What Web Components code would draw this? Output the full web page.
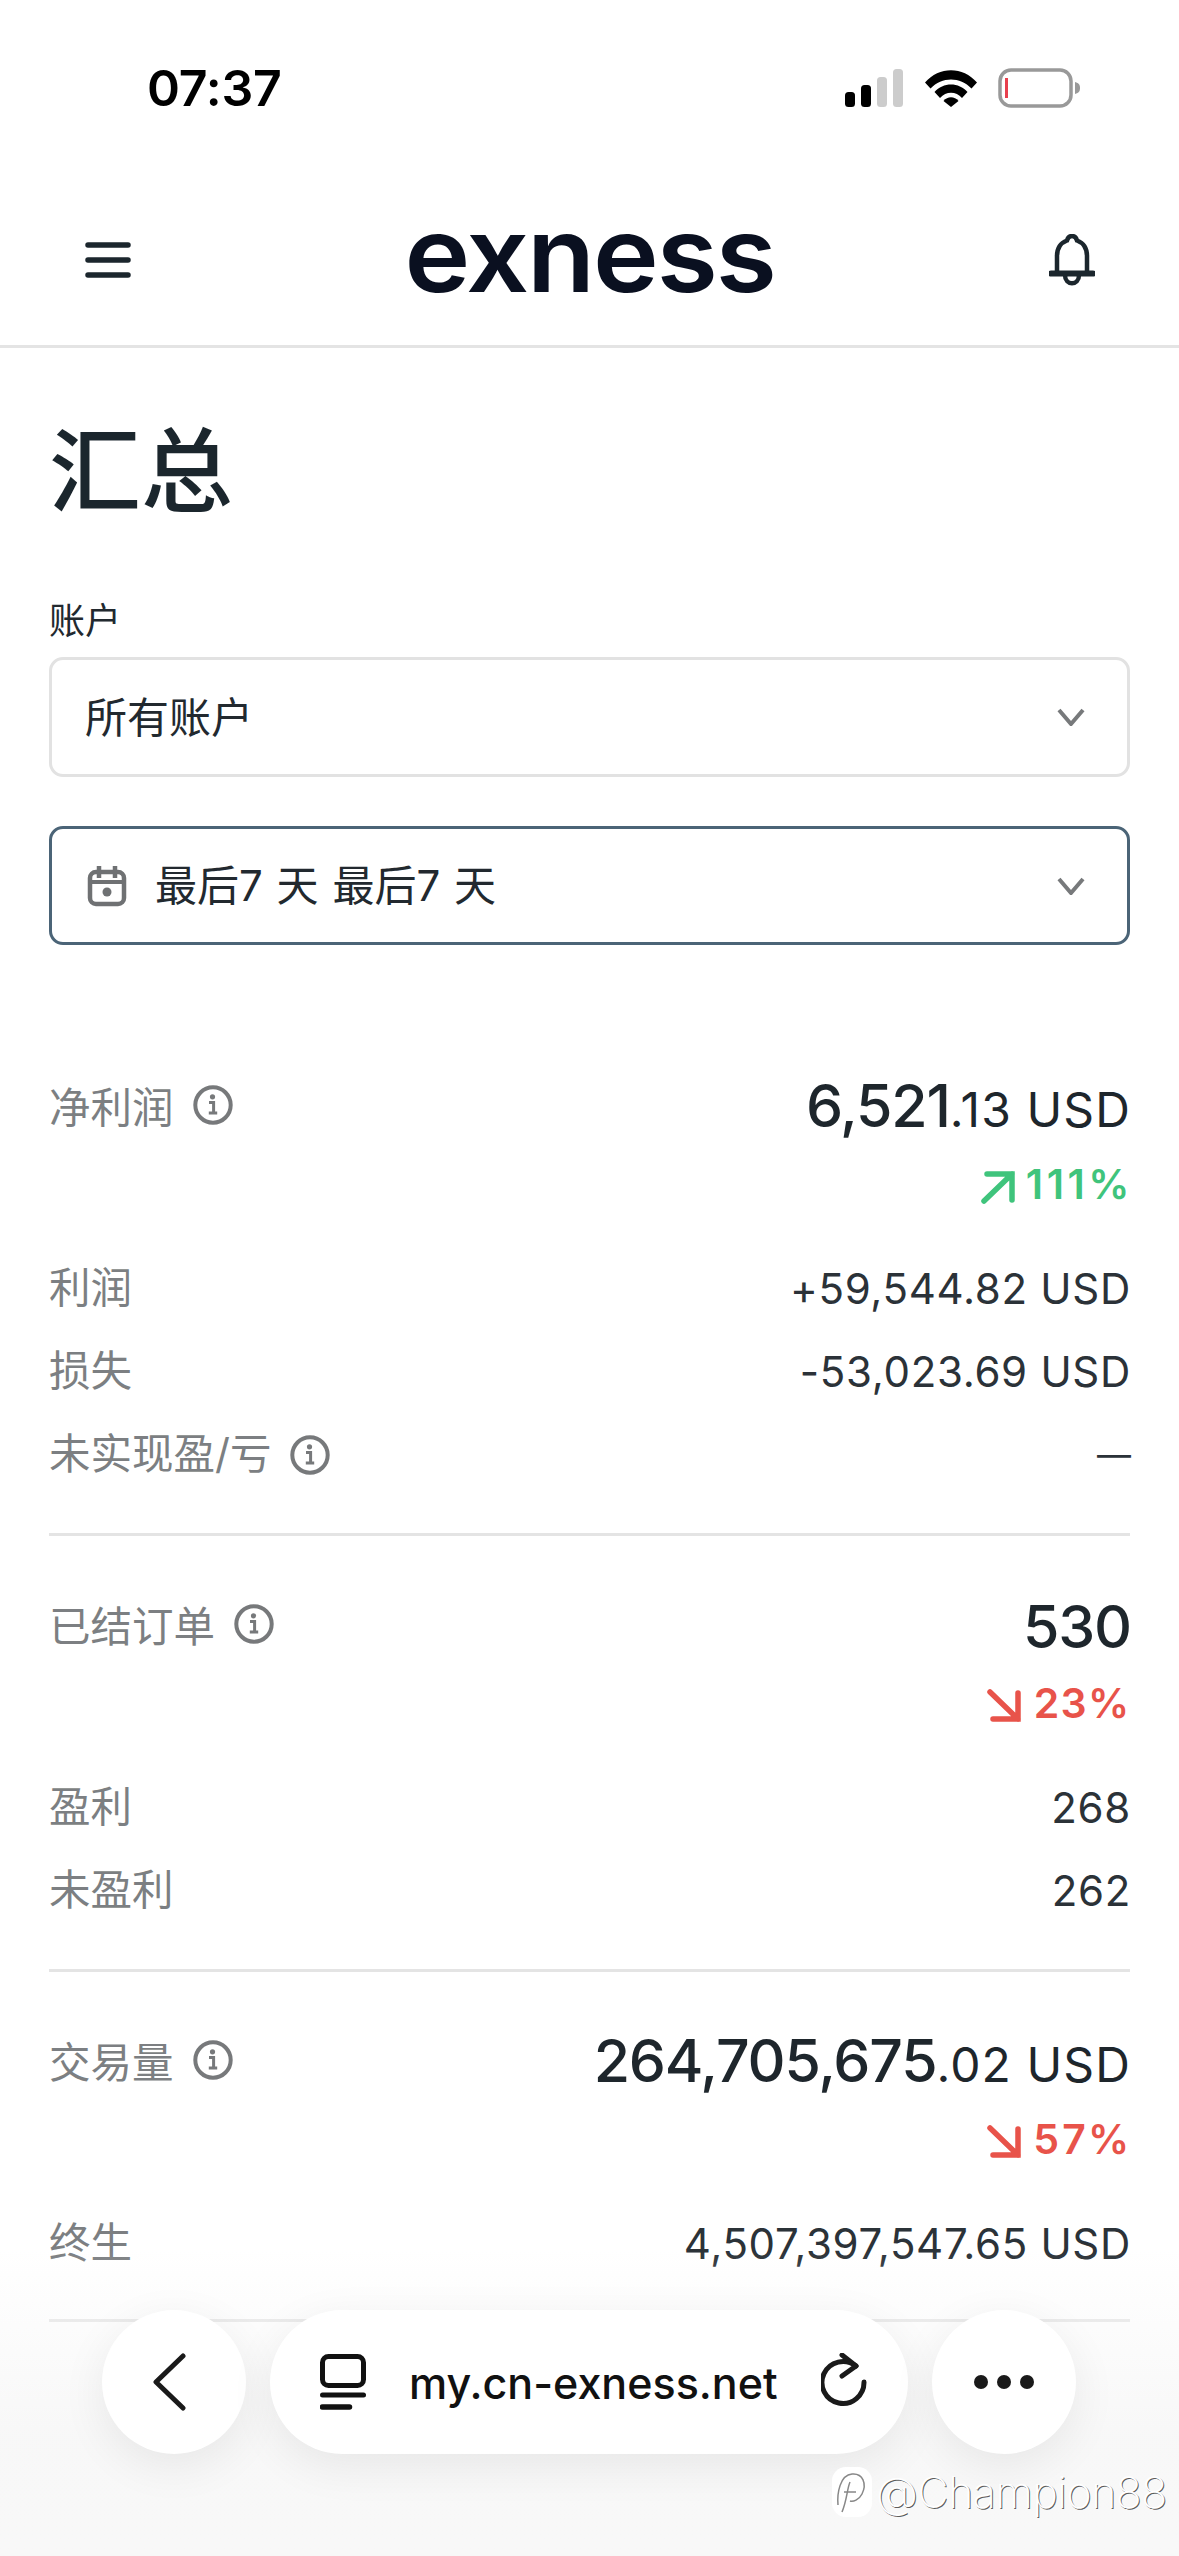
<!DOCTYPE html>
<html lang="zh"><head><meta charset="utf-8">
<style>
html,body{margin:0;padding:0;background:#fff}
body{width:1179px;height:2556px;overflow:hidden;position:relative;font-family:Inter,"Noto Sans CJK SC",sans-serif;color:#22292f}
</style></head>
<body>
<status-bar></status-bar>
<top-nav></top-nav>
<summary-page>
  <select-field label="账户" text="所有账户"></select-field>
  <select-field text="最后7 天 最后7 天" calendar active></select-field>
  <metric-group first>
    <metric-head label="净利润" big="6,521" small=".13 USD" trend="up" pct="111%"></metric-head>
    <metric-row label="利润" value="+59,544.82 USD"></metric-row>
    <metric-row label="损失" value="-53,023.69 USD"></metric-row>
    <metric-row label="未实现盈/亏" value="—" info dash></metric-row>
  </metric-group>
  <metric-group>
    <metric-head label="已结订单" big="530" trend="down" pct="23%"></metric-head>
    <metric-row label="盈利" value="268"></metric-row>
    <metric-row label="未盈利" value="262"></metric-row>
  </metric-group>
  <metric-group last>
    <metric-head label="交易量" big="264,705,675" small=".02 USD" trend="down" pct="57%"></metric-head>
    <metric-row label="终生" value="4,507,397,547.65 USD"></metric-row>
  </metric-group>
</summary-page>
<browser-bar></browser-bar>
<water-mark></water-mark>
<script>
const INFO=`<svg width="40" height="40" viewBox="0 0 40 40" fill="none" aria-hidden="true"><circle cx="20" cy="20" r="17.7" stroke="#77797b" stroke-width="4"/><circle cx="19.5" cy="11.8" r="2.6" fill="#77797b"/><path d="M16 17.5h4.6v10.2M15.8 28h8.4" stroke="#77797b" stroke-width="3"/></svg>`;
function el(name,html){customElements.define(name,class extends HTMLElement{
  connectedCallback(){ if(this.shadowRoot)return; const s=this.attachShadow({mode:'open'}); s.innerHTML=typeof html==='function'?html(this):html; }
});}
el('status-bar',`<style>
:host{display:flex;height:175px;align-items:center;justify-content:space-between;padding:0 98px 0 147px;box-sizing:border-box}
.t{font:600 50px/1 Inter,sans-serif;color:#000;letter-spacing:-.2px}
.i{display:flex;gap:21px;align-items:center}
</style><div class="t">07:37</div><div class="i">
<svg width="59" height="38" viewBox="0 0 59 38"><rect x="0" y="23" width="10" height="15" rx="3.5"/><rect x="16" y="16" width="10" height="22" rx="3.5"/><rect x="32" y="8" width="10" height="30" rx="3.5" fill="#ccc"/><rect x="48" y="0" width="10" height="38" rx="3.5" fill="#ccc"/></svg>
<svg width="52" height="38" viewBox="0 0 52 38"><path d="M0 13.5C14-3 38-3 52 13.5l-5.5 6C35 7.500 17 7.500 5.500 19.500z"/><path d="M9.500 23C18 13 34 13 42.500 23l-5.500 6C31 22 21 22 15 29z"/><path d="M18.500 32C22.500 27 29.500 27 33.500 32L26 38z"/></svg>
<svg width="83" height="40" viewBox="0 0 83 40" fill="none"><rect x="2" y="2" width="71" height="36" rx="11" stroke="#999" stroke-width="3.500"/><rect x="7" y="10" width="3" height="20" fill="#e8404e"/><path d="M77 14c4 1 5 3 5 6s-1 5-5 6z" fill="#999"/></svg>
</div>`);
el('top-nav',`<style>
:host{display:flex;height:173px;box-sizing:border-box;padding:0 85px 1px;align-items:center;justify-content:space-between;border-bottom:3px solid #e4e4e4}
.l{font:600 105px/1 Inter,sans-serif;color:#0a1020;letter-spacing:-2px;margin-top:-13px;margin-left:-1px;transform:scaleX(1.06)}
svg{display:block}
</style>
<svg width="46" height="36" viewBox="0 0 46 36" stroke="#1b262d" stroke-width="5.500" stroke-linecap="round"><path d="M3 3h40M3 18h40M3 33h40"/></svg>
<div class="l">exness</div>
<svg width="46" height="52" viewBox="0 0 46 52" fill="none" stroke="#1b262d" style="margin-right:-1px"><path d="M8 39V22C8 12 14 8 18 6.500C19.500 0.500 26.500 0.500 28 6.500C32 8 38 12 38 22V39" stroke-width="4.500"/><path d="M2 39.500H44" stroke-width="6" stroke-linecap="round"/><path d="M16 41c0 11 14 11 14 0" stroke-width="4.500"/></svg>`);
el('summary-page',`<style>
:host{display:block;padding:0 49px}
h1{margin:74px 0 0;font:500 92px/100px Inter,"Noto Sans CJK SC",sans-serif;color:#1b262d}
</style><h1>汇总</h1><slot></slot>`);
el('select-field',h=>{
 const lab=h.getAttribute('label'),act=h.hasAttribute('active'),cal=h.hasAttribute('calendar');
 return `<style>
:host{display:block;margin-top:${lab?79:49}px}
.lab{font:400 36px/40px Inter,"Noto Sans CJK SC",sans-serif;color:#22292f;margin-bottom:16px}
.box{height:${act?119:120}px;box-sizing:border-box;border:3px solid ${act?'#4b6477':'#e2e2e2'};border-radius:14px;display:flex;align-items:center;padding:0 42px 0 ${cal?35:33}px;font:400 42px/1 Inter,"Noto Sans CJK SC",sans-serif;color:#22292f}
.t{flex:1;white-space:pre;word-spacing:2px;margin-top:1px}
.c{margin-right:28px;display:block}
</style>${lab?`<div class="lab">${lab}</div>`:''}<div class="box">${cal?`<svg class="c" width="40" height="42" viewBox="0 0 40 42" fill="none"><rect x="3" y="7" width="34" height="32" rx="6" stroke="#6f7173" stroke-width="4.500"/><path d="M3 17h34" stroke="#6f7173" stroke-width="4"/><path d="M12 1v12M28 1v12" stroke="#6f7173" stroke-width="4.500"/><circle cx="20" cy="27" r="4.500" fill="#6f7173"/></svg>`:''}<span class="t">${h.getAttribute('text')}</span>
<svg width="28" height="18" viewBox="0 0 28 18" fill="none"><path d="M2 2l12 14L26 2" stroke="#77797b" stroke-width="4"/></svg></div>`;});
el('metric-group',h=>`<style>
:host{display:block;border-bottom:3px solid #e4e4e4;padding-bottom:${h.hasAttribute('last')?34:37}px;${h.hasAttribute('first')?'margin-top:72px':''}}
</style><slot></slot>`);
el('metric-head',h=>{const up=h.getAttribute('trend')==='up',col=up?'#3fc47c':'#e8534a';
 return `<style>
:host{display:block;padding-top:54px;margin-bottom:38px;font-family:Inter,"Noto Sans CJK SC",sans-serif}
.r{display:flex;justify-content:space-between;height:70px;align-items:center}
.l{display:flex;align-items:center;gap:19px;font-size:41.5px;color:#7c7f82;margin-top:-2px}
svg{display:block}
.v{font-size:59px;font-weight:500;color:#1e262c;line-height:70px;letter-spacing:-1.2px;margin-top:3px;margin-right:-1px}
.s{font-size:48px;font-weight:400;letter-spacing:1.1px}
.p{margin-top:18px;height:50px;display:flex;justify-content:flex-end;align-items:center;gap:${up?10:11}px;color:${col};font:600 41px/50px Inter,sans-serif;${up?'letter-spacing:3.5px;margin-right:-3px':'font-feature-settings:"tnum";letter-spacing:.8px'}}
</style><div class="r"><div class="l">${h.getAttribute('label')}${INFO}</div><div class="v">${h.getAttribute('big')}${h.getAttribute('small')?`<span class="s">${h.getAttribute('small')}</span>`:''}</div></div>
<div class="p"><svg width="36" height="36" viewBox="0 0 36 36" fill="none" stroke="${col}" stroke-width="5.500" stroke-linecap="round" style="margin-top:6px;${up?'':'transform:scaleY(-1)'}"><path d="M4 32L32 5M7 5h25v26"/></svg>${h.getAttribute('pct')}</div>`;});
el('metric-row',h=>`<style>
:host{display:flex;height:83px;align-items:center;justify-content:space-between;font:400 42px/1 Inter,"Noto Sans CJK SC",sans-serif}
.l{display:flex;align-items:center;gap:19px;color:#7c7f82;font-size:41.5px}
.v{color:#2b3238;letter-spacing:.7px;margin-right:-1px}
.d{font-size:34px;letter-spacing:0;color:#2b3238}
</style><div class="l">${h.getAttribute('label')}${h.hasAttribute('info')?INFO:''}</div><div class="v ${h.hasAttribute('dash')?'d':''}">${h.getAttribute('value')}</div>`);
el('browser-bar',`<style>
:host{position:absolute;left:0;right:0;bottom:0;height:306px;box-sizing:border-box;padding:60px 103px 0 102px;display:flex;gap:24px;align-items:flex-start;background:linear-gradient(to bottom,rgba(247,247,247,0),rgba(247,247,247,.9) 60%,#f8f8f8);}
.b{height:144px;background:#fff;border-radius:72px;box-shadow:0 12px 46px rgba(0,0,0,.07);display:flex;align-items:center;justify-content:center;box-sizing:border-box}
.c{width:144px;flex:none}
.p{flex:1;padding:0 39px 0 50px;justify-content:space-between;font:500 43px/1 Inter,sans-serif;color:#111}
svg{display:block}
.u{flex:1;padding-left:43px;white-space:nowrap;margin-top:2px}
</style>
<div class="b c"><svg width="34" height="58" viewBox="0 0 34 58" fill="none" stroke="#1a1a1a" stroke-width="5" stroke-linecap="round" stroke-linejoin="round" style="margin-left:-10px"><path d="M31 3L4 29l27 26"/></svg></div>
<div class="b p"><svg width="46" height="56" viewBox="0 0 46 56" fill="none" stroke="#111" stroke-linecap="round"><rect x="2.500" y="2.500" width="41" height="29" rx="6" stroke-width="5"/><path d="M2.500 41h41" stroke-width="5"/><path d="M2.500 53h27" stroke-width="5.500"/></svg><span class="u">my.cn-exness.net</span><svg width="48" height="58" viewBox="0 0 48 58" fill="none" stroke="#1a1a1a" stroke-width="5" stroke-linecap="round" stroke-linejoin="round"><path d="M35 13A21 21 0 1 0 43 29"/><path d="M21 2l14 11-14 10"/></svg></div>
<div class="b c"><svg width="62" height="16" viewBox="0 0 62 16" fill="#1a1a1a"><circle cx="8" cy="8" r="7"/><circle cx="31" cy="8" r="7"/><circle cx="54" cy="8" r="7"/></svg></div>`);
el('water-mark',`<style>
:host{position:absolute;left:832px;top:2464px;display:flex;align-items:center;gap:4px;font:200 43px/56px Inter,sans-serif;letter-spacing:-.5px;color:#fff;text-shadow:1px 1px 0 rgba(0,0,0,.65);white-space:nowrap}
.i{width:40px;height:50px;border-radius:14px;background:#fff;display:flex;align-items:center;justify-content:center}
</style><div class="i"><svg width="34" height="50" viewBox="0 0 34 50" fill="none" stroke="#888" stroke-width="1.500"><path d="M3 38c-1-12 2-30 14-31 11-1 15 10 10 20-3 6-9 8-12 7M15 15c-3 7-3 18-8 30M9 25h12"/></svg></div><span>@Champion88</span>`);
</script>
</body></html>
